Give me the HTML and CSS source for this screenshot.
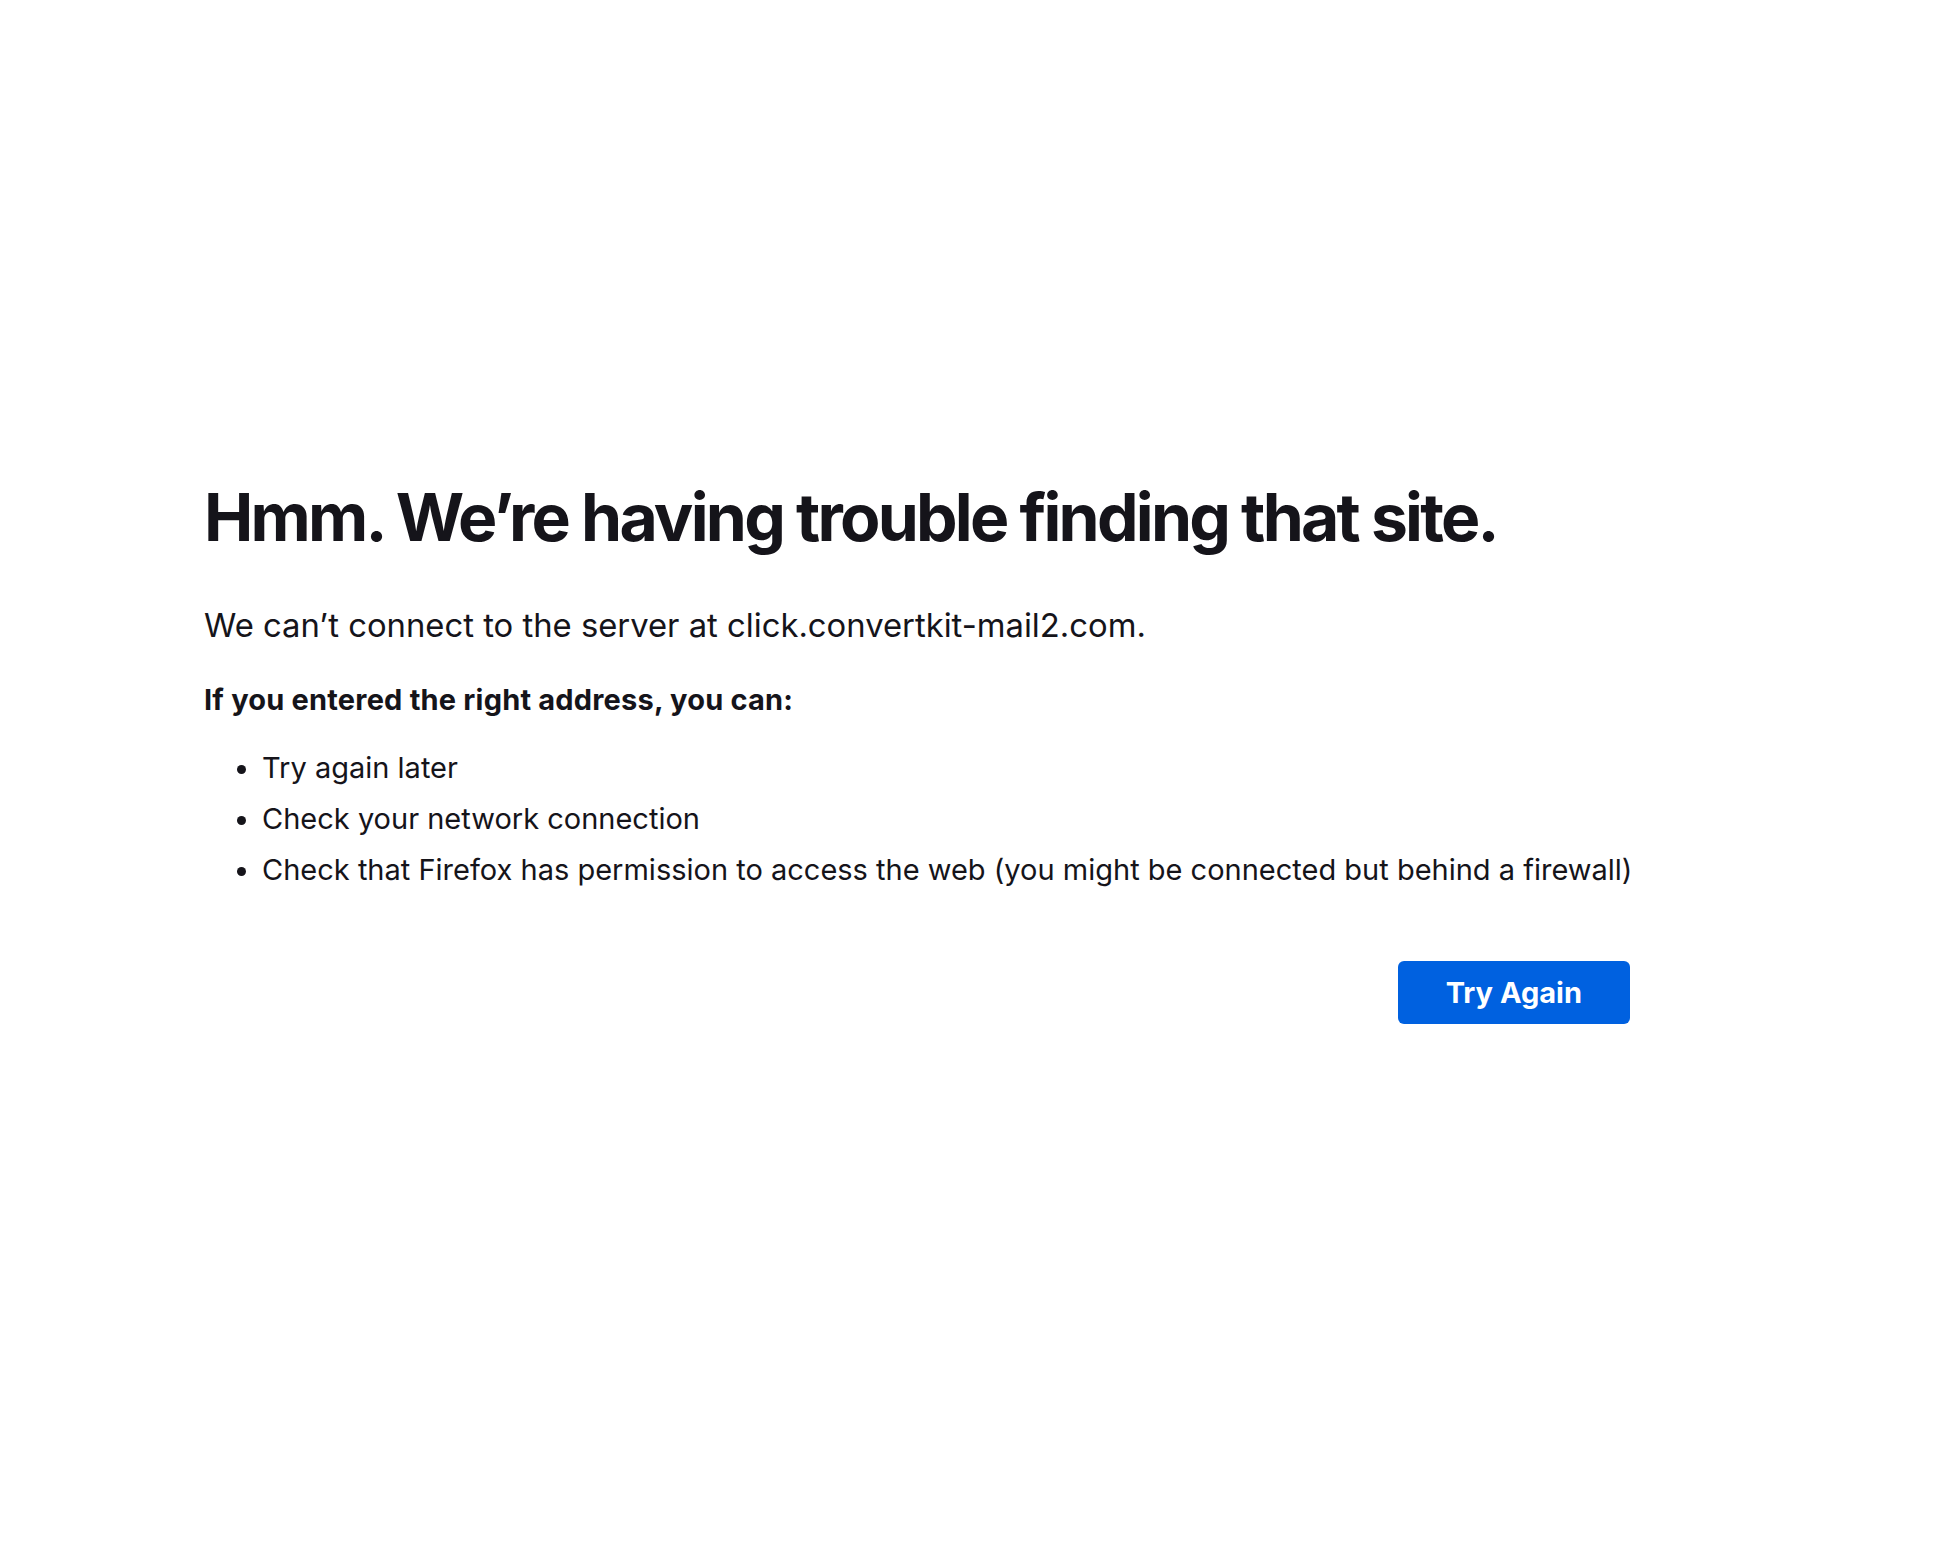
FILE: index.html
```html
<!DOCTYPE html>
<html>
<head>
	<meta charset="UTF-8">
	<title>Problem loading page</title>
	<link rel="stylesheet" href="styles.css">
</head>
<body>
	<div class="container">
		<h1 class="title">Hmm. We’re having trouble finding that site.</h1>

		<p class="short-desc">We can’t connect to the server at click.convertkit-mail2.com.</p>

		<p class="long-desc"><strong>If you entered the right address, you can:</strong></p>
		<ul class="tips">
			<li>Try again later</li>
			<li>Check your network connection</li>
			<li>Check that Firefox has permission to access the web (you might be connected but behind a firewall)</li>
		</ul>

		<div class="buttons">
			<button class="primary">Try Again</button>
		</div>
	</div>
</body>
</html>
```

FILE: styles.css
```css
body {
	margin: 0;
	padding: 477px 300px 0 204px;
	font-family: Inter, "Noto Sans", sans-serif;
	color: #15141a;
	background: #fff;
}

.title {
	margin: 0;
	font-size: 66px;
	line-height: 80px;
	font-weight: 700;
	letter-spacing: -2.75px;
}

.short-desc {
	margin: 46px 0 0;
	font-size: 32.8px;
	line-height: 44px;
}

.long-desc {
	margin: 35px 0 0;
	font-size: 29px;
	line-height: 36px;
	letter-spacing: 0.2px;
}

.tips {
	margin: 24px 0 0;
	padding-left: 58px;
	font-size: 29px;
	line-height: 51px;
}

.buttons {
	display: flex;
	justify-content: flex-end;
	margin: 66px 28px 0 0;
}

.primary {
	height: 63px;
	padding: 0 48px;
	border: none;
	border-radius: 6px;
	background: #0061e0;
	color: #fff;
	font-family: inherit;
	font-size: 29px;
	font-weight: 700;
}
```
